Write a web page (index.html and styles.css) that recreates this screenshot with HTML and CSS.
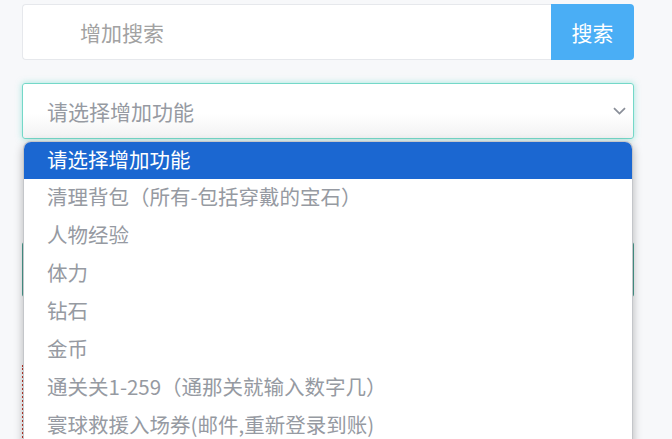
FILE: index.html
```html
<!DOCTYPE html>
<html lang="zh">
<head>
<meta charset="utf-8">
<link rel="stylesheet" href="styles.css">
</head>
<body>
<div class="page">
  <div class="search-row">
    <div class="search-input">增加搜索</div>
    <div class="search-btn">搜索</div>
  </div>
  <div class="select">
    <span class="select-text">请选择增加功能</span>
    <svg class="chev" width="13" height="8" viewBox="0 0 13 8"><path d="M1 1.2 L6.5 6.6 L12 1.2" fill="none" stroke="#8a8f99" stroke-width="1.8"/></svg>
  </div>
  <div class="action-btn"></div>
  <div class="notes"></div>
  <ul class="dropdown">
    <li class="active">请选择增加功能</li>
    <li>清理背包（所有-包括穿戴的宝石）</li>
    <li>人物经验</li>
    <li>体力</li>
    <li>钻石</li>
    <li>金币</li>
    <li>通关关1-259（通那关就输入数字几）</li>
    <li>寰球救援入场券(邮件,重新登录到账)</li>
  </ul>
</div>
</body>
</html>
```
FILE: styles.css
```css
html, body {
  margin: 0;
  padding: 0;
  background: #f7f8fa;
  font-family: "Noto Sans CJK SC", "Noto Sans", sans-serif;
  overflow: hidden;
  height: 439px;
}
.page {
  position: relative;
  padding: 4px 38px 0 22px;
}
.search-row {
  display: flex;
  height: 56px;
}
.search-input {
  flex: 1;
  background: #fff;
  border: 1px solid #e6e8ec;
  border-right: none;
  border-radius: 4px 0 0 4px;
  padding-left: 57px;
  display: flex;
  align-items: center;
  font-size: 21px;
  color: #a2a2a2;
}
.search-btn {
  width: 83px;
  background: #4aaef5;
  color: #fff;
  font-size: 21px;
  border-radius: 0 4px 4px 0;
  display: flex;
  align-items: center;
  justify-content: center;
}
.select {
  margin-top: 23px;
  height: 54px;
  border: 1px solid #74d8c8;
  border-radius: 3px;
  box-shadow: 0 0 6px rgba(90, 215, 195, 0.55);
  background: linear-gradient(#fff 55%, #f2f2f3);
  display: flex;
  align-items: center;
  justify-content: space-between;
  padding: 0 7px 0 24px;
}
.select-text {
  font-size: 21px;
  color: #969aa2;
}
.chev {
  display: block;
}
.action-btn {
  margin-top: 103px;
  height: 55px;
  background: #4a9d8f;
  border-radius: 3px;
}
.notes {
  margin-top: 68px;
  height: 80px;
  border-left: 2px dotted #c0392b;
}
.dropdown {
  position: absolute;
  left: 23px;
  top: 141px;
  width: 608px;
  margin: 0;
  padding: 0;
  list-style: none;
  background: #fff;
  border: 1px solid #c4c6ca;
  border-bottom: none;
  border-radius: 8px 8px 0 0;
  box-shadow: 0 3px 10px rgba(0, 0, 0, 0.28);
  overflow: hidden;
}
.dropdown li {
  height: 38px;
  line-height: 35px;
  padding-left: 23px;
  font-size: 20.5px;
  color: #969aa2;
  white-space: nowrap;
}
.dropdown li.active {
  height: 37px;
  line-height: 35px;
  background: #1b67d1;
  color: #fff;
}
```
